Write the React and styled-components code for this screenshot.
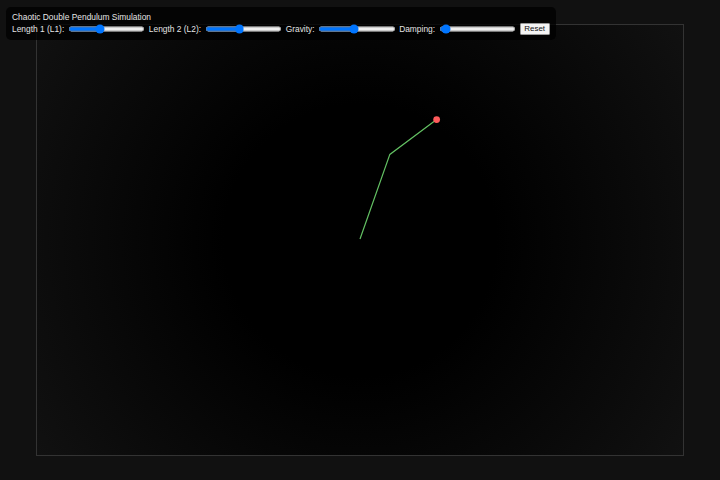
import React, { useState } from 'react';
import styled, { createGlobalStyle } from 'styled-components';

const GlobalStyle = createGlobalStyle`
  html, body {
    margin: 0;
    padding: 0;
    background: #111;
    overflow: hidden;
  }
  #root {
    height: 100vh;
  }
`;

const Page = styled.div`
  height: 100vh;
  display: flex;
  align-items: center;
  justify-content: center;
  font-family: "Liberation Sans", Arial, sans-serif;
`;

const Stage = styled.div`
  width: 90vw;
  height: 90vh;
  box-sizing: border-box;
  border: 1px solid #333;
  background: radial-gradient(circle at 50% 50%, #000 35%, #111 100%);
`;

const Drawing = styled.svg`
  display: block;
  width: 100%;
  height: 100%;
`;

// panel is written at natural size and zoomed to match the scaled-down shot
const Controls = styled.div`
  position: absolute;
  top: 12px;
  left: 10px;
  zoom: 0.6;
  padding: 10px 10px 9px;
  border-radius: 8px;
  background: rgba(0, 0, 0, 0.75);
  color: #e4e4e4;
  font-size: 14px;
`;

const Title = styled.div`
  line-height: 16px;
`;

const Row = styled.div`
  display: flex;
  align-items: center;
  white-space: nowrap;
`;

const Label = styled.label`
  display: flex;
  align-items: center;
  margin-right: 6px;
`;

const Slider = styled.input`
  margin: 2px 0 2px 6px;
`;

const ResetButton = styled.button`
  font-family: "Liberation Sans", Arial, sans-serif;
  font-size: 13.33px;
  padding: 1px 6px;
  background: #f4f4f4;
  border: 1px solid #999;
  border-radius: 2px;
  color: #111;
`;

const sliders = [
  { id: 'l1', label: 'Length 1 (L1):', value: 40 },
  { id: 'l2', label: 'Length 2 (L2):', value: 44 },
  { id: 'g', label: 'Gravity:', value: 46 },
  { id: 'd', label: 'Damping:', value: 4 },
];

export default function App() {
  const [values, setValues] = useState(() =>
    Object.fromEntries(sliders.map(s => [s.id, s.value]))
  );

  const pivot = [324, 215];
  const bob1 = [354, 130];
  const bob2 = [401, 95];

  return (
    <>
      <GlobalStyle />
      <Page>
        <Controls>
          <Title>Chaotic Double Pendulum Simulation</Title>
          <Row>
            {sliders.map(s => (
              <Label key={s.id}>
                {s.label}
                <Slider
                  type="range"
                  min="0"
                  max="100"
                  step="0.1"
                  value={values[s.id]}
                  onChange={e => setValues({ ...values, [s.id]: e.target.value })}
                />
              </Label>
            ))}
            <ResetButton>Reset</ResetButton>
          </Row>
        </Controls>
        <Stage>
          <Drawing viewBox="0 0 648 432">
            <polyline
              points={`${pivot.join(',')} ${bob1.join(',')} ${bob2.join(',')}`}
              fill="none"
              stroke="#63c163"
              strokeWidth="1.2"
            />
            <circle cx={bob2[0]} cy={bob2[1]} r="3.4" fill="#ff5b5b" />
          </Drawing>
        </Stage>
      </Page>
    </>
  );
}
